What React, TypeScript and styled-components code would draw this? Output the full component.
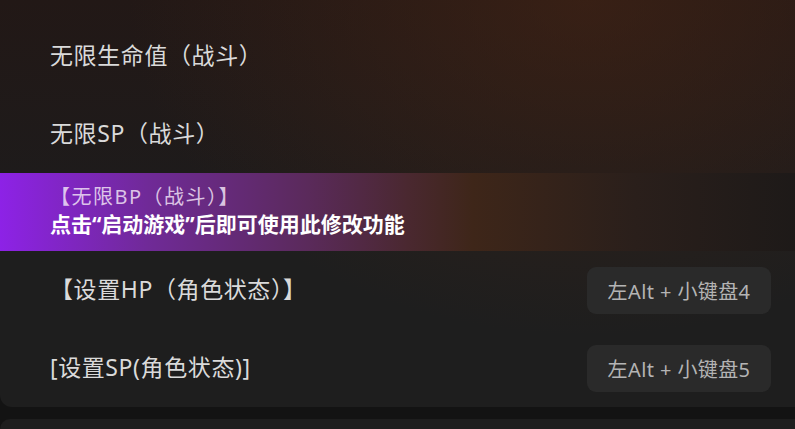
import styled, { createGlobalStyle } from "styled-components";

const GlobalStyle = createGlobalStyle`
  html, body {
    margin: 0;
    padding: 0;
    background: #131313;
    overflow: hidden;
  }
  body {
    font-family: "Noto Sans", "Noto Sans CJK SC", sans-serif;
  }
`;

const Page = styled.div`
  width: 795px;
  height: 429px;
  overflow: hidden;
  display: flex;
  flex-direction: column;
  gap: 12px;
  background: #131313;
`;

const Panel = styled.div`
  margin-right: -20px;
  padding-top: 17px;
  border-radius: 0 0 12px 12px;
  background:
    radial-gradient(ellipse 75% 110% at 72% 0%, rgba(74, 38, 20, 0.55), rgba(74, 38, 20, 0) 75%),
    linear-gradient(180deg, #221816 0px, #1e1b1b 173px, #1e1e1e 173px);
  display: flex;
  flex-direction: column;
`;

const NextPanel = styled.div`
  flex: 1;
  margin-right: -20px;
  border-radius: 12px 12px 0 0;
  background: #1e1e1e;
`;

const Row = styled.div`
  height: 78px;
  box-sizing: border-box;
  display: flex;
  align-items: center;
  justify-content: space-between;
  padding: 0 44px 5px 50px;
`;

const Label = styled.span`
  font-size: 23px;
  letter-spacing: 0.6px;
  color: #dadada;
  white-space: nowrap;
`;

const Band = styled.div`
  height: 78px;
  box-sizing: border-box;
  display: flex;
  flex-direction: column;
  justify-content: center;
  padding: 0 0 2px 50px;
  background: linear-gradient(
    90deg,
    #8d22e6 0%,
    #702a98 18%,
    #5a2a5a 38%,
    #4a2830 50%,
    #3e2619 58%,
    #2a1f1b 78%,
    #1c1918 100%
  );
`;

const BandTitle = styled.span`
  font-size: 20px;
  line-height: 26px;
  letter-spacing: 1.5px;
  color: rgba(240, 225, 245, 0.85);
  white-space: nowrap;
`;

const BandHint = styled.span`
  font-size: 21px;
  line-height: 28px;
  font-weight: 700;
  color: #ffffff;
  white-space: nowrap;
`;

const Hotkey = styled.span`
  height: 47px;
  width: 184px;
  box-sizing: border-box;
  display: flex;
  align-items: center;
  justify-content: center;
  margin-top: 5px;
  border-radius: 9px;
  background: #2a2a2a;
  color: #b4b4b4;
  font-size: 20px;
  letter-spacing: 0.4px;
  white-space: nowrap;
`;

interface Item {
  label: string;
  hotkey?: string;
}

const topItems: Item[] = [
  { label: "无限生命值（战斗）" },
  { label: "无限SP（战斗）" },
];

const bottomItems: Item[] = [
  { label: "【设置HP（角色状态）】", hotkey: "左Alt + 小键盘4" },
  { label: "[设置SP(角色状态)]", hotkey: "左Alt + 小键盘5" },
];

const App = () => {
  return (
    <>
      <GlobalStyle />
      <Page>
        <Panel>
          {topItems.map((item) => (
            <Row key={item.label}>
              <Label>{item.label}</Label>
            </Row>
          ))}
          <Band>
            <BandTitle>【无限BP（战斗）】</BandTitle>
            <BandHint>点击“启动游戏”后即可使用此修改功能</BandHint>
          </Band>
          {bottomItems.map((item) => (
            <Row key={item.label}>
              <Label>{item.label}</Label>
              {item.hotkey && <Hotkey>{item.hotkey}</Hotkey>}
            </Row>
          ))}
        </Panel>
        <NextPanel />
      </Page>
    </>
  );
};

export default App;
